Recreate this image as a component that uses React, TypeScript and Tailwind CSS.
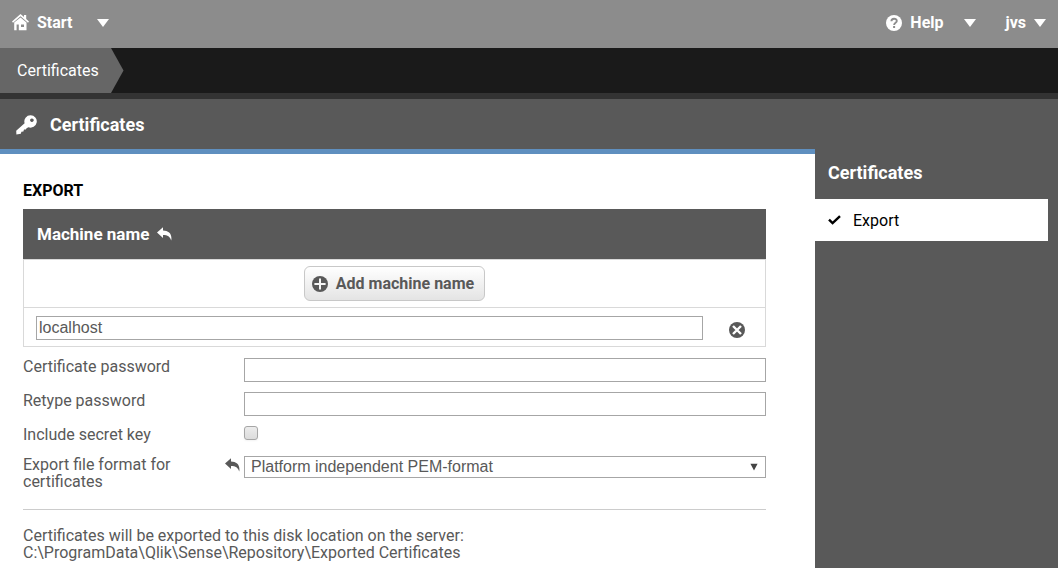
import React, { useState } from "react";

function HomeIcon() {
  return (
    <svg width="17" height="17" viewBox="0 0 17 17" fill="currentColor" aria-hidden="true">
      <path d="M8.5 0 L12 3 V1 H14.2 V5 L17 7.6 L16 8.7 L8.5 2.2 L1 8.7 L0 7.6 Z" />
      <path fillRule="evenodd" d="M8.5 3.4 L14.5 8.6 V16.2 H2.2 V8.6 Z M4.6 10.6 V16.2 H6.8 V10.6 Z M9 10.6 V13 H12 V10.6 Z" />
    </svg>
  );
}

function KeyIcon() {
  return (
    <svg width="21" height="20" viewBox="0 0 21 20" fill="currentColor" aria-hidden="true">
      <path
        fillRule="evenodd"
        d="M14.6 0.2 A6.2 6.2 0 1 1 12.4 12.2 L10.6 13.2 L9.8 14.6 L8 14.6 L7.4 16.6 L5.4 16.8 L4.8 18.8 L0.4 19.6 L0.2 15.8 L8.6 8.2 A6.2 6.2 0 0 1 14.6 0.2 Z M15.9 3.4 A1.8 1.8 0 1 0 15.91 3.4 Z"
      />
    </svg>
  );
}

function ResetIcon() {
  return (
    <svg width="15" height="14" viewBox="0 0 15 14" fill="currentColor" aria-hidden="true">
      <path d="M0 5.6 L6 0.2 V3.4 C11.8 3.4 15.4 7 14.2 13.6 C13.2 9.8 10.6 8 6 8 V11 Z" />
    </svg>
  );
}

function HelpIcon() {
  return (
    <svg width="16" height="16" viewBox="0 0 16 16" aria-hidden="true">
      <circle cx="8" cy="8" r="8" fill="currentColor" />
      <path d="M5.4 6.2 C5.4 2.9 10.8 2.9 10.8 6 C10.8 7.9 8.1 7.7 8.1 10" fill="none" stroke="#8c8c8c" strokeWidth="1.9" />
      <rect x="7.1" y="11" width="2" height="2" fill="#8c8c8c" />
    </svg>
  );
}

function PlusIcon() {
  return (
    <svg width="16" height="16" viewBox="0 0 16 16" aria-hidden="true">
      <circle cx="8" cy="8" r="8" fill="currentColor" />
      <path d="M8 2.4 V13.6 M2.4 8 H13.6" stroke="#f6f6f6" strokeWidth="2" />
    </svg>
  );
}

function RemoveIcon() {
  return (
    <svg width="16" height="16" viewBox="0 0 16 16" aria-hidden="true">
      <circle cx="8" cy="8" r="8" fill="currentColor" />
      <path d="M4 4 L12 12 M12 4 L4 12" stroke="#fff" strokeWidth="2.4" />
    </svg>
  );
}

function CheckIcon() {
  return (
    <svg width="13" height="10" viewBox="0 0 13 10" fill="none" aria-hidden="true">
      <path d="M1 4.6 L4.6 8.2 L12 1.2" stroke="currentColor" strokeWidth="2.4" />
    </svg>
  );
}

function Caret() {
  return (
    <svg width="12" height="8" viewBox="0 0 12 8" fill="currentColor" aria-hidden="true">
      <path d="M0 0 H12 L6 8 Z" />
    </svg>
  );
}

const fieldClass = "h-6 w-full min-w-0 border border-[#a6a6a6] bg-white px-[2px] outline-none";

export default function App() {
  const [machines, setMachines] = useState<string[]>(["localhost"]);
  const [secret, setSecret] = useState(false);

  return (
    <div className="flex min-h-screen flex-col bg-[#595959] font-[Roboto,sans-serif] text-base leading-[17px] text-[#595959]">
      <header className="flex h-12 items-center justify-between bg-[#8c8c8c] px-3 pb-[3px] font-bold text-white">
        <button type="button" className="flex items-center gap-2">
          <HomeIcon />
          <span className="mr-4">Start</span>
          <Caret />
        </button>
        <div className="flex items-center gap-[30px]">
          <button type="button" className="flex items-center gap-2">
            <HelpIcon />
            <span className="mr-3">Help</span>
            <Caret />
          </button>
          <button type="button" className="flex items-center gap-2">
            jvs
            <Caret />
          </button>
        </div>
      </header>

      <nav className="flex h-[51px] border-b-6 border-[#333333] bg-[#1a1a1a]" aria-label="Breadcrumb">
        <a href="#certificates" className="flex items-center bg-[#666666] pl-[17px] text-white">
          <span className="w-[94px]">Certificates</span>
        </a>
        <svg width="13" height="45" viewBox="0 0 13 45" aria-hidden="true">
          <path d="M0 0 L12.5 22.5 L0 45 Z" fill="#666666" />
        </svg>
      </nav>

      <div className="flex h-[50px] items-center gap-[13px] px-4 pt-px text-white">
        <KeyIcon />
        <h1 className="text-lg font-bold">Certificates</h1>
      </div>

      <div className="flex flex-1">
        <main className="min-w-0 flex-1 border-t-5 border-[#5f8fbf] bg-white pt-7 pr-[49px] pl-[23px]">
          <h2 className="mb-[10px] font-bold text-black">EXPORT</h2>

          <section>
            <div className="flex h-[50px] items-center gap-2 bg-[#595959] px-[14px] text-white">
              <h3 className="text-[17px] font-bold">Machine name</h3>
              <button type="button" aria-label="Reset machine names">
                <ResetIcon />
              </button>
            </div>
            <div className="border border-[#d9d9d9]">
              <div className="flex h-[47px] items-center justify-center">
                <button
                  type="button"
                  onClick={() => setMachines([...machines, ""])}
                  className="flex h-[35px] items-center gap-2 rounded-md border border-[#c8c8c8] bg-linear-to-b from-white to-[#e4e4e4] px-[7px] font-bold"
                >
                  <PlusIcon />
                  <span className="pr-[3px]">Add machine name</span>
                </button>
              </div>
              {machines.map((name, index) => (
                <div key={index} className="flex h-[39px] items-center border-t border-[#d9d9d9] pt-[2px] pr-5 pl-3">
                  <input
                    type="text"
                    aria-label="Machine name"
                    value={name}
                    onChange={(e) => setMachines(machines.map((m, i) => (i === index ? e.target.value : m)))}
                    className={`${fieldClass} mr-[26px] font-['Liberation_Sans',sans-serif]`}
                  />
                  <button
                    type="button"
                    aria-label="Remove machine name"
                    className="pt-1"
                    onClick={() => setMachines(machines.filter((_, i) => i !== index))}
                  >
                    <RemoveIcon />
                  </button>
                </div>
              ))}
            </div>
          </section>

          <form className="mt-[11px] flex flex-col gap-[10px]">
            <div className="flex">
              <label htmlFor="password" className="w-[221px] shrink-0">Certificate password</label>
              <input id="password" type="password" className={fieldClass} />
            </div>
            <div className="flex">
              <label htmlFor="retype" className="w-[221px] shrink-0">Retype password</label>
              <input id="retype" type="password" className={fieldClass} />
            </div>
            <div className="flex h-5">
              <label htmlFor="secret" className="w-[221px] shrink-0">Include secret key</label>
              <input
                id="secret"
                type="checkbox"
                checked={secret}
                onChange={(e) => setSecret(e.target.checked)}
                className="size-[14px] appearance-none rounded-[3px] border border-[#a6a6a6] bg-linear-to-b from-[#ececec] to-[#dcdcdc] shadow-xs checked:from-[#595959] checked:to-[#595959]"
              />
            </div>
            <div className="flex items-start">
              <div className="flex w-[221px] shrink-0 items-start justify-between pr-1">
                <label htmlFor="format" className="w-40">Export file format for certificates</label>
                <button type="button" aria-label="Reset file format" className="mt-[2px]">
                  <ResetIcon />
                </button>
              </div>
              <div className="relative w-full min-w-0">
                <select
                  id="format"
                  className="block h-[22px] w-full appearance-none border border-[#a6a6a6] bg-white pl-[6px] font-['Liberation_Sans',sans-serif] leading-5 outline-none"
                >
                  <option>Platform independent PEM-format</option>
                  <option>Windows format</option>
                </select>
                <svg className="pointer-events-none absolute top-[7px] right-2 text-[#444444]" width="8" height="8" viewBox="0 0 8 8" fill="currentColor" aria-hidden="true">
                  <path d="M0.4 0.8 H7.6 L4 7.6 Z" />
                </svg>
              </div>
            </div>
          </form>

          <p className="mt-[19px] border-t border-[#cccccc] pt-[17px]">
            Certificates will be exported to this disk location on the server:
            <br />
            C:\ProgramData\Qlik\Sense\Repository\Exported Certificates
          </p>
        </main>

        <aside className="w-[243px] shrink-0 pr-[10px] text-white">
          <h2 className="flex h-[50px] items-center pb-[2px] pl-[13px] text-lg font-bold">Certificates</h2>
          <a href="#export" className="flex h-[42px] items-center gap-3 bg-white pl-[13px] text-black">
            <CheckIcon />
            Export
          </a>
        </aside>
      </div>
    </div>
  );
}
